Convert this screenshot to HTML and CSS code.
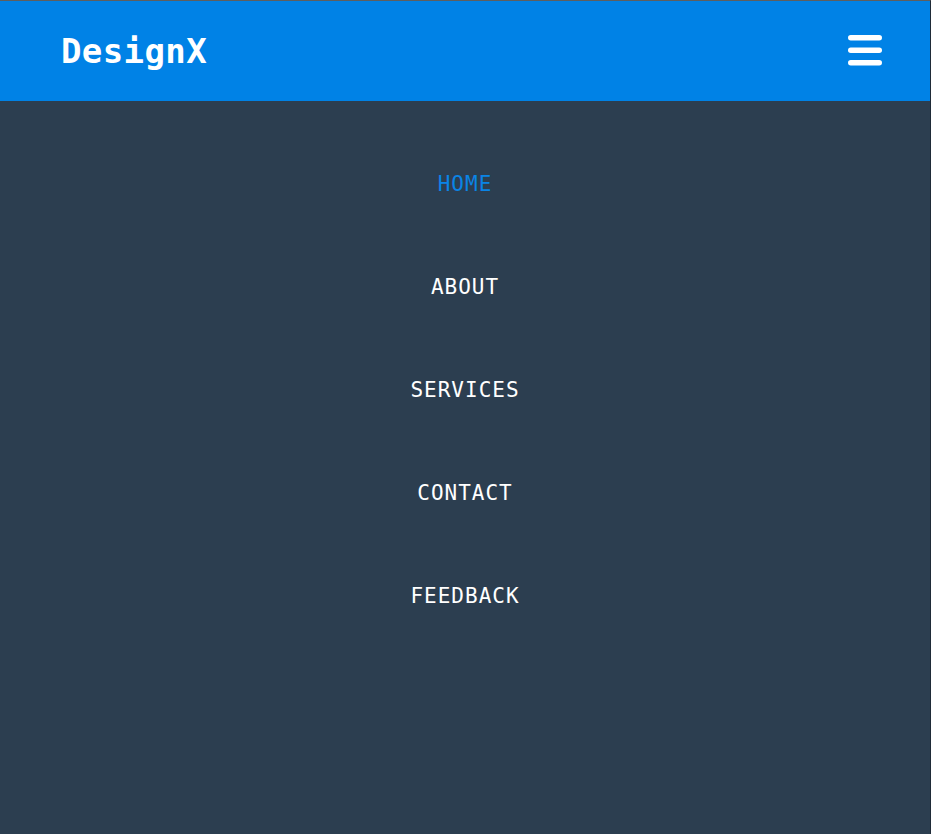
FILE: index.html
```html
<!DOCTYPE html>
<html lang="en">
<head>
<meta charset="utf-8">
<title>DesignX</title>
<link rel="stylesheet" href="styles.css">
</head>
<body>
<div class="frame">
  <header class="topbar">
    <div class="logo">DesignX</div>
    <button class="burger" aria-label="Menu">
      <svg width="34" height="31" viewBox="0 0 34 31">
        <rect x="0" y="0" width="34" height="5.5" rx="2.75" fill="#fff"/>
        <rect x="0" y="12.5" width="34" height="5.5" rx="2.75" fill="#fff"/>
        <rect x="0" y="25" width="34" height="5.5" rx="2.75" fill="#fff"/>
      </svg>
    </button>
  </header>
  <nav class="menu">
    <ul class="menu-list">
      <li class="menu-item"><a class="menu-link active" href="#">HOME</a></li>
      <li class="menu-item"><a class="menu-link" href="#">ABOUT</a></li>
      <li class="menu-item"><a class="menu-link" href="#">SERVICES</a></li>
      <li class="menu-item"><a class="menu-link" href="#">CONTACT</a></li>
      <li class="menu-item"><a class="menu-link" href="#">FEEDBACK</a></li>
    </ul>
  </nav>
</div>
</body>
</html>
```
FILE: styles.css
```css
html, body {
  margin: 0;
  padding: 0;
  height: 100%;
}
body {
  background: #2c3e50;
  font-family: "DejaVu Sans Mono", "Liberation Mono", monospace;
}
.frame {
  min-height: 834px;
  box-sizing: border-box;
  border-top: 1px solid #5e5e5e;
  border-right: 1px solid #1f2b38;
  background: #2c3e50;
}
.topbar {
  height: 100px;
  background: #0082e6;
  display: flex;
  align-items: center;
  justify-content: space-between;
  padding: 0 48px 0 61px;
}
.logo {
  color: #fff;
  font-weight: bold;
  font-size: 34px;
  letter-spacing: 0.4px;
}
.burger {
  background: none;
  border: 0;
  padding: 0;
  display: flex;
  margin-top: -2px;
}
.menu-list {
  list-style: none;
  margin: 0;
  padding: 31px 0 0;
  display: flex;
  flex-direction: column;
  align-items: center;
}
.menu-item {
  height: 103px;
  display: flex;
  align-items: center;
}
.menu-link {
  color: #fff;
  text-decoration: none;
  font-size: 21px;
  letter-spacing: 1px;
}
.menu-link.active {
  color: #0a84e6;
}
```
